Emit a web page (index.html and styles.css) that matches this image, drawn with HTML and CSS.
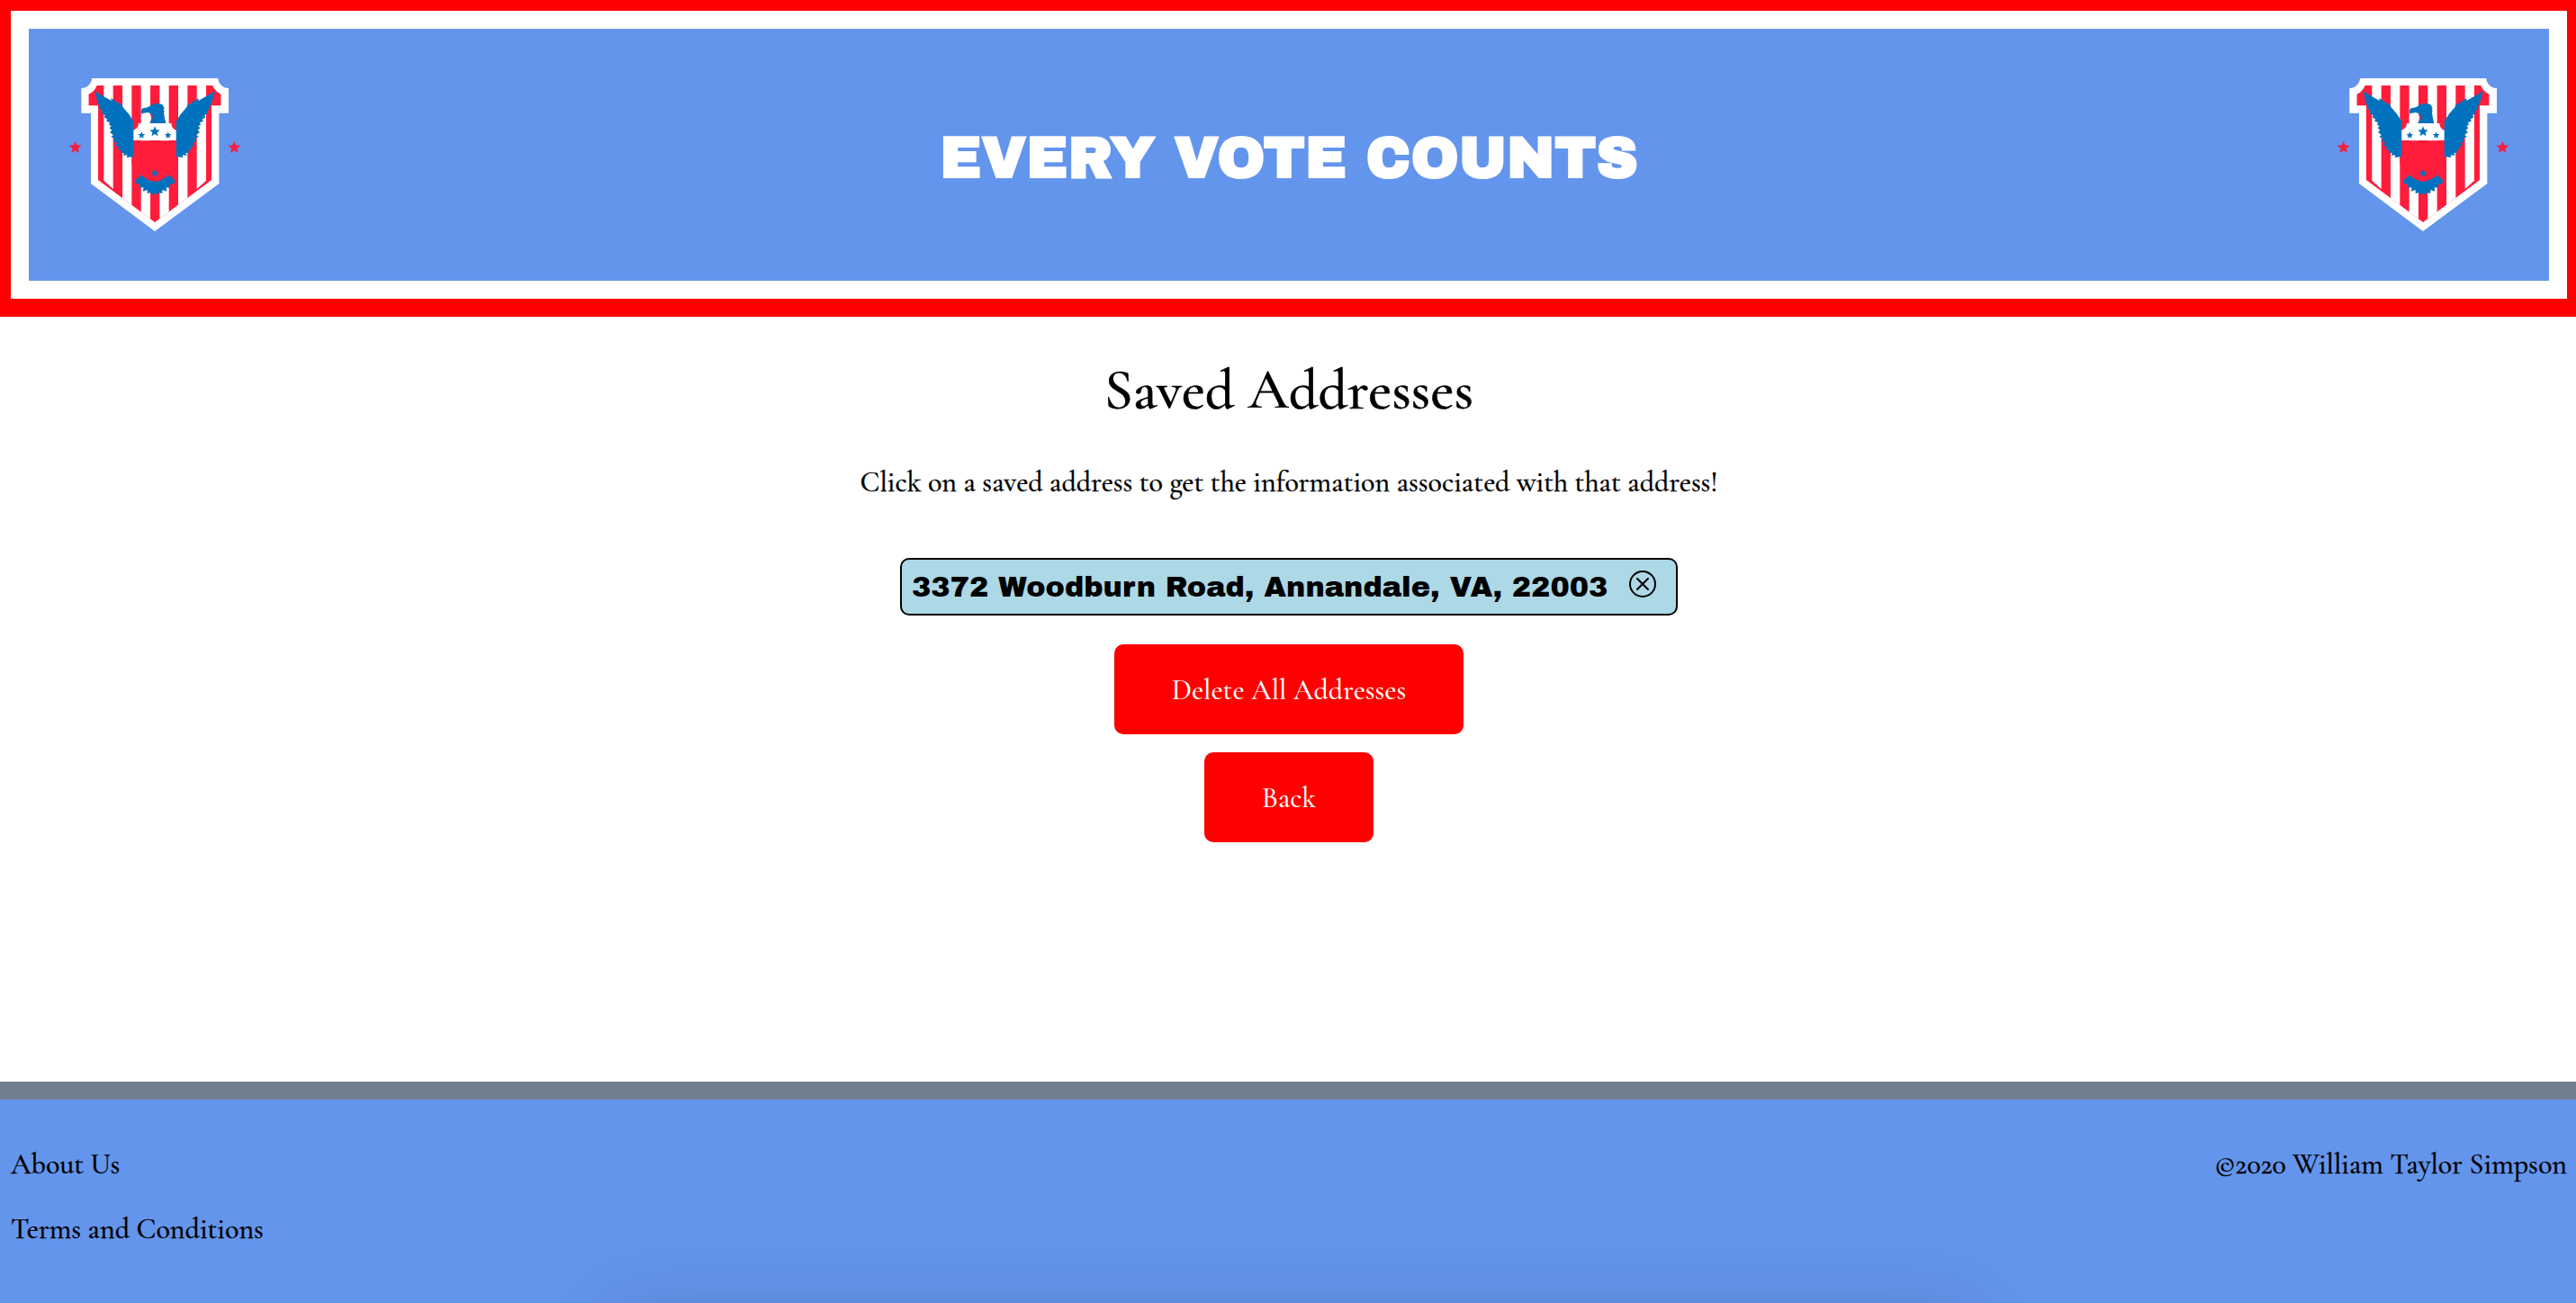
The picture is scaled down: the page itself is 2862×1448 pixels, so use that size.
FILE: index.html
```
<!DOCTYPE html>
<html lang="en">
<head>
<meta charset="utf-8">
<title>Every Vote Counts</title>
<link rel="stylesheet" href="styles.css">
</head>
<body>
<svg class="defs" width="0" height="0" aria-hidden="true">
  <defs>
    <clipPath id="field"><path d="M323 285H709A50 50 0 0 0 737 314V352H705V600L516 741L327 600V352H295V314A50 50 0 0 0 323 285Z"/></clipPath>
    <path id="star" d="M0-100L27-36L95-31L43 14L59 81L0 46L-59 81L-43 14L-95-31L-27-36Z"/>
    <path id="wing" d="M315 304L371 336L370 327L405 350L404 342L410 358Q430 378 445 405V521L441 523L422 525L424 517L409 518L413 510L401 509L404 501L392 498L397 490L384 485L390 478L377 470L383 463L370 456L378 450L366 441L373 434L365 427L371 420L363 416L366 408L354 404L358 398L347 391L350 384L339 377L340 369L331 360L334 353L325 346L328 339L320 330L323 326Z"/>
    <symbol id="crest" viewBox="216 216 600 600">
      <path fill="#fff" d="M306 261H727A35 34 0 0 0 762 294V377H730V612L516 771L303 612V377H271V294A35 34 0 0 0 306 261Z"/>
      <g clip-path="url(#field)">
        <path fill="#ff1d3b" d="M290 280H742V745H290Z"/>
        <path fill="#fff" d="M346 280H377V630L346 602ZM408 280H439V745H408ZM470 280H501V745H470ZM532 280H563V745H532ZM594 280H625V745H594ZM656 280H687V602L656 630Z"/>
      </g>
      <path fill="#ff1d3b" d="M439 469H594V545L564 590L516 610L468 590L439 545Z"/>
      <ellipse cx="487" cy="394" rx="17" ry="20" fill="#fff"/>
      <path fill="#fff" d="M444 468V434Q461 429 462 411H571Q572 430 588 434V468Z"/>
      <g fill="#0072bd">
        <use href="#wing"/>
        <use href="#wing" transform="translate(1032 0) scale(-1 1)"/>
        <path d="M498 411C509 400 512 390 505 382C499 374 487 373 483 377C477 375 475 378 474 382C468 372 469 362 480 360Q494 359 499 354C510 343 533 342 543 350L548 362L545 365L548 371L546 374Q548 394 553 411Z"/>
        <path d="M470 582Q490 603 516 605Q542 603 564 582L570 590L582 600L581 613L567 614L567 626L554 625L556 638L541 633L541 645L528 642L524 650L516 645L508 650L503 642L491 645L491 633L477 638L478 625L465 626L466 613L450 613L450 600L463 592Z"/>
        <use href="#star" transform="translate(516 439) scale(.18)"/>
        <use href="#star" transform="translate(472 451) scale(.12)"/>
        <use href="#star" transform="translate(560 451) scale(.12)"/>
        <use href="#star" transform="translate(516 578) scale(.14)"/>
      </g>
      <g fill="#f5203f">
        <use href="#star" transform="translate(251 492) scale(.22)"/>
        <use href="#star" transform="translate(781 492) scale(.22)"/>
      </g>
    </symbol>
  </defs>
</svg>

<header class="banner">
  <div class="banner-inner">
    <svg class="crest"><use href="#crest"/></svg>
    <div class="banner-title">EVERY VOTE COUNTS</div>
    <svg class="crest"><use href="#crest"/></svg>
  </div>
</header>

<main class="content">
  <h1 class="heading">Saved Addresses</h1>
  <p class="hint">Click on a saved address to get the information associated with that address!</p>
  <div class="address">
    <span class="address-text">3372 Woodburn Road, Annandale, VA, 22003</span>
    <svg class="remove" viewBox="0 0 30 30"><circle cx="15" cy="15" r="14"/><path d="M9 9L21 21M21 9L9 21"/></svg>
  </div>
  <button class="btn">Delete All Addresses</button>
  <button class="btn">Back</button>
</main>

<footer class="footer">
  <nav class="links">
    <a class="link">About Us</a>
    <a class="link">Terms and Conditions</a>
  </nav>
  <div class="copyright">©2020 William Taylor Simpson</div>
  <div class="shade"></div>
</footer>
</body>
</html>
```
FILE: styles.css
```
* { box-sizing: border-box; }

html { height: 100%; overflow: hidden; }

body {
  margin: 0;
  width: 2864px;
  height: 100%;
  display: flex;
  flex-direction: column;
  overflow: hidden;
  background: #fff;
  color: #000;
  font-family: "Cormorant Garamond", "Liberation Serif", serif;
  font-size: 32px;
  font-weight: 500;
  line-height: 39px;
  -webkit-text-stroke: .3px currentColor;
}

.defs { position: absolute; }

.banner {
  flex: none;
  height: 352px;
  border: 12px solid #f00;
  border-bottom-width: 20px;
}

.banner-inner {
  display: flex;
  align-items: center;
  justify-content: space-between;
  height: 320px;
  padding: 0 40px;
  border: 20px solid #fff;
  background: cornflowerblue;
}

.crest { width: 200px; height: 200px; }

.banner-title {
  padding-top: 7px;
  color: #fff;
  font-family: "Archivo Black", Inter, sans-serif;
  font-size: 64px;
  font-weight: 700;
  line-height: 70px;
  -webkit-text-stroke: 0;
}

.content {
  flex: 1;
  display: flex;
  flex-direction: column;
  align-items: center;
}

.heading {
  margin: 42px 0 0;
  font-size: 64px;
  font-weight: 500;
  line-height: 77px;
  -webkit-text-stroke-width: .6px;
}

.hint { margin: 45px 0 65px; }

.address {
  display: flex;
  align-items: flex-start;
  width: 864px;
  height: 64px;
  margin-bottom: 32px;
  padding: 12px 22px 0 11px;
  border: 2px solid #000;
  border-radius: 10px;
  background: lightblue;
}

.address-text {
  font-family: "Archivo Black", Inter, sans-serif;
  font-weight: 400;
  line-height: 38px;
  white-space: nowrap;
  -webkit-text-stroke: 0;
}

.remove {
  width: 30px;
  height: 30px;
  margin-left: auto;
  fill: none;
  stroke: #000;
  stroke-width: 2;
  stroke-linecap: round;
}

.btn {
  height: 100px;
  margin-bottom: 20px;
  padding: 0 64px;
  border: 0;
  border-radius: 10px;
  background: #f00;
  color: #fff;
  font: inherit;
  -webkit-text-stroke: 0;
}

.footer {
  position: relative;
  flex: none;
  display: flex;
  justify-content: space-between;
  height: 246px;
  padding: 52px 12px 0;
  border-top: 20px solid slategray;
  background: cornflowerblue;
  overflow: hidden;
}

.links {
  display: flex;
  flex-direction: column;
  gap: 33px;
}

/* soft shadow rising from below the fold */
.shade {
  position: absolute;
  left: 670px;
  right: 662px;
  top: 236px;
  height: 200px;
  box-shadow: 0 0 100px rgba(0, 0, 0, .14);
}
```
